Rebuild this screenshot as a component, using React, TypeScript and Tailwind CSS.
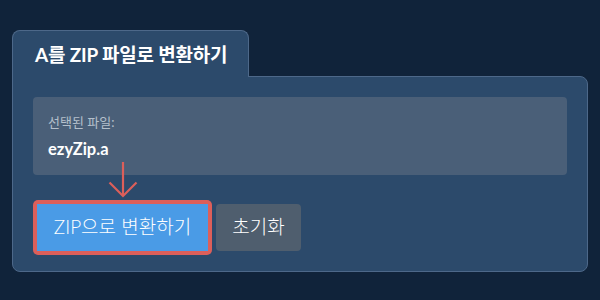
import React from 'react';

const font = { fontFamily: 'Lato, "Noto Sans CJK KR", sans-serif' };

function DownArrow() {
  return (
    <svg
      className="pointer-events-none absolute left-[75px] top-[-38px]"
      width="30"
      height="36"
      viewBox="0 0 30 36"
      fill="none"
      stroke="#dc5f5a"
      strokeWidth="2.2"
    >
      <path d="M15 0 V34" />
      <path d="M1.5 20.5 L15 34 L28.5 20.5" />
    </svg>
  );
}

export default function App() {
  return (
    <div
      className="h-[300px] w-[600px] bg-[#10233a] pl-3 pr-3 pt-[30px]"
      style={font}
    >
      <div className="relative z-10 -mb-px flex h-[47px] w-[237px] items-center rounded-t-[8px] border border-b-0 border-[#4d6889] bg-[#2c4a6b] pl-[22px]">
        <h2 className="pt-[2px] text-[19px] font-bold tracking-[-0.2px] text-white">
          A를 ZIP 파일로 변환하기
        </h2>
      </div>
      <div className="h-[196px] w-[576px] rounded-b-[8px] rounded-tr-[8px] border border-[#4d6889] bg-[#2c4a6b] px-5 pt-5">
        <div className="h-[78px] rounded-[4px] bg-[#4a5f78] px-[15px] pt-[16px]">
          <p className="text-[13px] leading-[18px] text-[#b4bfcb]">선택된 파일:</p>
          <p className="mt-[8px] text-[16.5px] font-bold leading-[20px] text-white">
            ezyZip.a
          </p>
        </div>
        <div className="relative mt-[25px] flex items-center gap-1">
          <DownArrow />
          <div className="rounded-[5px] bg-[#dc5f5a] p-1">
            <button className="h-[47px] w-[171px] bg-[#4a9be6] text-[19px] font-light text-white">
              ZIP으로 변환하기
            </button>
          </div>
          <button className="h-[47px] w-[85px] rounded-[4px] bg-[#4f5e6e] text-[19px] font-light text-white">
            초기화
          </button>
        </div>
      </div>
    </div>
  );
}
